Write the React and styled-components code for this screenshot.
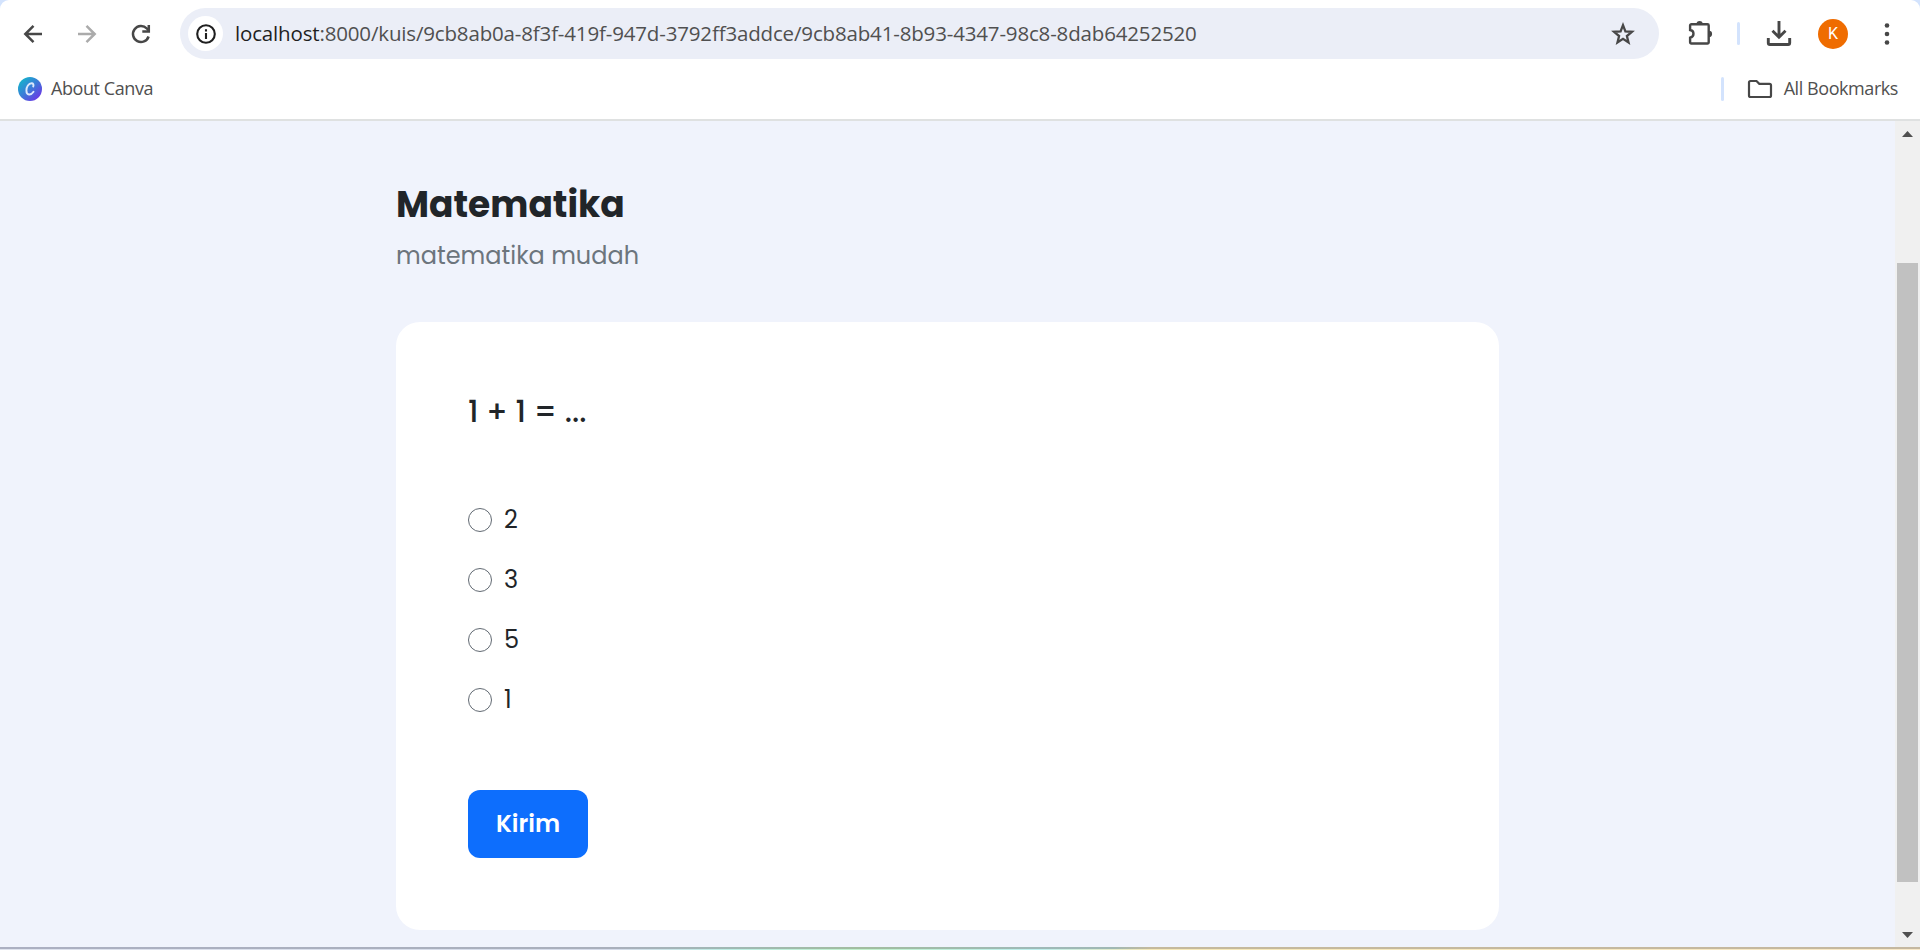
import React from "react";
import styled, { createGlobalStyle } from "styled-components";

const GlobalStyle = createGlobalStyle`
  *, *::before, *::after { box-sizing: border-box; }
  body { margin: 0; overflow: hidden; background: #fff; }
`;

const ui = `"Segoe UI", "Open Sans", "Noto Sans", sans-serif`;
const brand = `Poppins, Inter, "Open Sans", sans-serif`;

const Window = styled.div`
  display: flex;
  flex-direction: column;
  width: 1920px;
  height: 950px;
  overflow: hidden;
  background: #d3e3fd;
`;

const Chrome = styled.header`
  flex: none;
  height: 121px;
  background: #fff;
  border-bottom: 2px solid #dfe1e1;
  border-radius: 9px 9px 0 0;
  font-family: ${ui};
  color: #474747;
`;

const Toolbar = styled.div`
  display: flex;
  align-items: center;
  height: 59px;
  padding: 8px 20px 0 21px;
`;

const Icon = styled.svg`
  display: block;
  flex: none;
  overflow: visible;
  width: ${(p) => p.$w || 24}px;
  height: ${(p) => p.$h || p.$w || 24}px;
  margin-left: ${(p) => p.$gap || 0}px;
  color: ${(p) => p.$color || "#474747"};
`;

const AddressBar = styled.div`
  display: flex;
  align-items: center;
  flex: none;
  width: 1479px;
  height: 51px;
  margin-left: 27px;
  padding: 0 24px 0 8px;
  border-radius: 26px;
  background: #ebeef7;
`;

const SiteInfo = styled.div`
  display: grid;
  place-items: center;
  width: 35px;
  height: 35px;
  border-radius: 50%;
  background: #fff;
`;

const Url = styled.span`
  flex: 1;
  margin-left: 12px;
  padding-bottom: 2px;
  font-size: 20.5px;
  font-weight: 400;
  line-height: 28px;
  letter-spacing: ${(p) => p.$track}px;
  white-space: nowrap;
  color: #505050;
`;

const Host = styled.span`
  color: #1f1f1f;
`;

const Divider = styled.div`
  flex: none;
  width: 3px;
  height: ${(p) => p.$h}px;
  margin-left: ${(p) => p.$gap || 0}px;
  border-radius: 1.5px;
  background: #d3e3fd;
`;

const Avatar = styled.div`
  display: grid;
  place-items: center;
  flex: none;
  width: 30px;
  height: 30px;
  margin-left: 27px;
  border-radius: 50%;
  background: #ef6c00;
  color: #fff;
  font: 400 16px/30px Roboto, sans-serif;
`;

const BookmarkBar = styled.div`
  display: flex;
  align-items: center;
  height: 60px;
  padding: 0 22px 0 18px;
`;

const BookmarkLabel = styled.span`
  margin-left: ${(p) => p.$gap}px;
  padding-bottom: 2px;
  font-size: 18px;
  font-weight: 400;
  line-height: 24px;
  letter-spacing: ${(p) => p.$track}px;
  white-space: nowrap;
  color: #505050;
`;

const Spacer = styled.div`
  flex: 1;
`;

const Viewport = styled.div`
  display: flex;
  flex: 1;
  min-height: 0;
  background: #f0f3fc;
`;

const Page = styled.main`
  flex: 1;
  padding: 62px 396px 0;
  font-family: ${brand};
  color: #212529;
`;

const Title = styled.h1`
  margin: 0;
  font-size: 36px;
  font-weight: 700;
  line-height: 43px;
`;

const Subtitle = styled.p`
  margin: 12px 0 0;
  font-size: 24px;
  font-weight: 400;
  line-height: 36px;
  color: #6c757d;
`;

const Card = styled.form`
  display: flex;
  flex-direction: column;
  align-items: flex-start;
  width: 1103px;
  height: 608px;
  margin-top: 48px;
  padding: 72px;
  border-radius: 24px;
  background: #fff;
`;

const Question = styled.h2`
  margin: 0;
  font-size: 30px;
  font-weight: 500;
  line-height: 36px;
`;

const Options = styled.div`
  display: flex;
  flex-direction: column;
  gap: 24px;
  margin-top: 72px;
`;

const Option = styled.label`
  display: flex;
  align-items: center;
  height: 36px;
  gap: 12px;
  font-size: 24px;
  line-height: 36px;
`;

const Radio = styled.input`
  appearance: none;
  width: 24px;
  height: 24px;
  margin: 0;
  border: 1px solid #626a73;
  border-radius: 50%;
  background: #fff;
`;

const Submit = styled.button`
  width: 120px;
  height: 68px;
  margin-top: 72px;
  padding: 0;
  border: 0;
  border-radius: 12px;
  background: #0d6efd;
  color: #fff;
  font: 600 24px/36px ${brand};
`;

const Scrollbar = styled.div`
  display: flex;
  flex-direction: column;
  align-items: center;
  flex: none;
  width: 25px;
  padding: 10px 0 9px;
  background: #f0f0f0;
`;

const Thumb = styled.div`
  width: 21px;
  height: 619px;
  margin: 126px 0 50px;
  background: #c1c1c1;
`;

const BottomEdge = styled.div`
  flex: none;
  height: 3px;
  background:
    linear-gradient(90deg, #acb0c2 0%, #a9afbc 32%, #a0b8b4 38%, #a2bda0 45%, #9fb9b8 54%, #a0b8b4 58%, #c5b99d 60%, #c5b8a0 100%) top / 100% 2px no-repeat,
    linear-gradient(90deg, #dfe3ee 0%, #d5dbea 32%, #bdeee4 38%, #c2f0cc 45%, #bcefee 54%, #f5e8b8 60%, #f8e8c8 100%);
`;

const answers = ["2", "3", "5", "1"];

export default function App() {
  return (
    <Window>
      <GlobalStyle />
      <Chrome>
        <Toolbar>
          <Icon $w={24} viewBox="0 0 24 24" fill="none" stroke="currentColor" strokeWidth="2.5">
            <path d="M21 12H4.500M12.500 3.800 4.300 12l8.200 8.200" />
          </Icon>
          <Icon $w={24} $gap={30} $color="#ababab" viewBox="0 0 24 24" fill="none" stroke="currentColor" strokeWidth="2.5">
            <path d="M3 12h16.500M11.500 3.800l8.200 8.200-8.200 8.200" />
          </Icon>
          <Icon $w={24} $gap={30} viewBox="0 0 24 24" fill="none" stroke="currentColor" strokeWidth="2.5">
            <path d="M19.600 14.500A8 8 0 1 1 17.800 6.500L20 8.700" />
            <path d="M19.800 3v6.500h-6.500" />
          </Icon>
          <AddressBar>
            <SiteInfo>
              <Icon $w={20} $color="#1f1f1f" viewBox="0 0 20 20" fill="none" stroke="currentColor" strokeWidth="2.1">
                <circle cx="10" cy="10" r="8.800" />
                <path d="M10 9v6M10 5.300v2.200" />
              </Icon>
            </SiteInfo>
            <Url $track={-0.16}>
              <Host>localhost</Host>:8000/kuis/9cb8ab0a-8f3f-419f-947d-3792ff3addce/9cb8ab41-8b93-4347-98c8-8dab64252520
            </Url>
            <Icon $w={24} viewBox="0 0 24 24" fill="none" stroke="currentColor" strokeWidth="2.3">
              <path d="m12 3.200 2.400 6.100 6.600.5-5.100 4.200 1.600 6.400L12 16.900l-5.500 3.500 1.600-6.400L3 9.800l6.600-.5z" />
            </Icon>
          </AddressBar>
          <Icon $w={25} $gap={28.5} viewBox="0 0 25 25" fill="none" stroke="currentColor" strokeWidth="2.4">
            <path d="M3.800 3.300h15.700a1.200 1.200 0 0 1 1.200 1.200v16.800a1.200 1.200 0 0 1-1.200 1.200H3.300a1.200 1.200 0 0 1-1.200-1.200v-4.600c4.500-1 4.500-7 0-7.700V4.500a1.200 1.200 0 0 1 1.700-1.200z" />
            <path d="M8.500 3a3 3 0 0 1 6.200 0zM21 9.800a3 3 0 0 1 0 6.200z" fill="currentColor" stroke="none" />
          </Icon>
          <Divider $h={23} $gap={24.5} />
          <Icon $w={24} $h={25} $gap={27} viewBox="0 0 24 25" fill="none" stroke="currentColor" strokeWidth="2.9">
            <path d="M12 0v16M5.500 9.700l6.500 6.500 6.500-6.500M1.300 17v4.900q0 1.600 1.600 1.600h18.200q1.600 0 1.600-1.600V17" />
          </Icon>
          <Avatar>K</Avatar>
          <Icon $w={6} $h={22} $gap={36} viewBox="0 0 6 22" fill="currentColor">
            <circle cx="3" cy="2.500" r="2.300" />
            <circle cx="3" cy="11" r="2.300" />
            <circle cx="3" cy="19.500" r="2.300" />
          </Icon>
        </Toolbar>
        <BookmarkBar>
          <Icon $w={24} viewBox="0 0 24 24">
            <defs>
              <linearGradient id="canva" x1="0.100" y1="0.100" x2="0.850" y2="0.900">
                <stop offset="0" stopColor="#14b4cb" />
                <stop offset="0.500" stopColor="#3b7cd8" />
                <stop offset="1" stopColor="#6a39e4" />
              </linearGradient>
            </defs>
            <circle cx="12" cy="12" r="12" fill="url(#canva)" />
            <path d="M15.200 9.500c.8-1.800 0-3.200-1.600-3.200-3 0-5.200 3.700-5.200 7.200 0 5.200 4.600 5 7.100 1.300" fill="none" stroke="#dce8fc" strokeWidth="1.900" strokeLinecap="round" />
          </Icon>
          <BookmarkLabel $gap={9} $track={-0.42}>About Canva</BookmarkLabel>
          <Spacer />
          <Divider $h={24} />
          <Icon $w={24} $h={18} $gap={24} viewBox="0 0 24 18" fill="none" stroke="currentColor" strokeWidth="2.2">
            <path d="M2.500 1h6l2.800 2.800h10.200q1.500 0 1.500 1.500v10.200q0 1.500-1.500 1.500h-19Q1 17 1 15.500v-13Q1 1 2.500 1z" />
          </Icon>
          <BookmarkLabel $gap={12} $track={-0.43}>All Bookmarks</BookmarkLabel>
        </BookmarkBar>
      </Chrome>
      <Viewport>
        <Page>
          <Title>Matematika</Title>
          <Subtitle>matematika mudah</Subtitle>
          <Card>
            <Question>1 + 1 = ...</Question>
            <Options>
              {answers.map((a) => (
                <Option key={a}>
                  <Radio type="radio" name="answer" value={a} />
                  {a}
                </Option>
              ))}
            </Options>
            <Submit type="button">Kirim</Submit>
          </Card>
        </Page>
        <Scrollbar>
          <Icon $w={11} $h={6} $color="#505050" viewBox="0 0 11 6" fill="currentColor"><path d="M0 6 5.500 0 11 6z" /></Icon>
          <Thumb />
          <Icon $w={11} $h={6} $color="#505050" viewBox="0 0 11 6" fill="currentColor"><path d="M0 0h11L5.500 6z" /></Icon>
        </Scrollbar>
      </Viewport>
      <BottomEdge />
    </Window>
  );
}
